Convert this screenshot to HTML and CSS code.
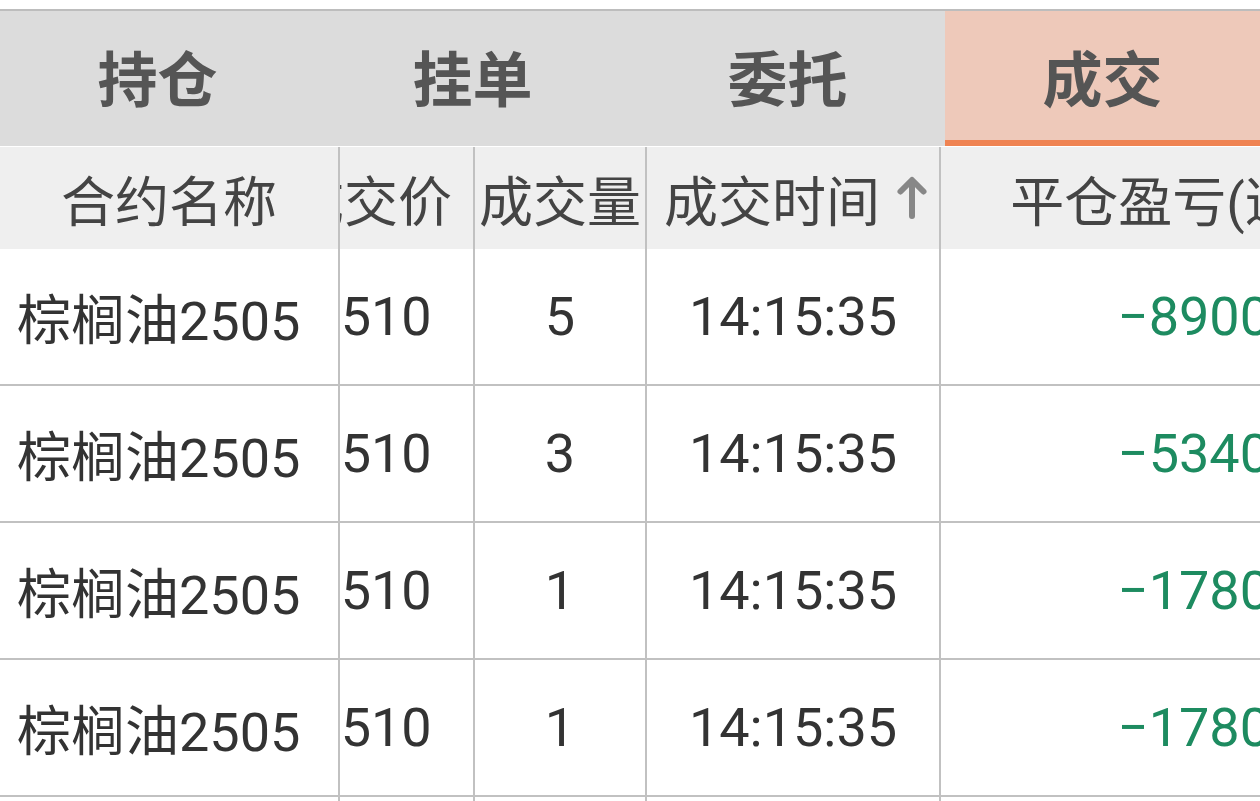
FILE: index.html
```html
<!DOCTYPE html>
<html lang="zh-CN">
<head>
<meta charset="utf-8">
<title>成交</title>
<link rel="stylesheet" href="styles.css">
</head>
<body>
<div class="page">
  <nav class="tabs">
    <div class="tab">持仓</div>
    <div class="tab">挂单</div>
    <div class="tab">委托</div>
    <div class="tab active">成交</div>
  </nav>
  <div class="table">
    <div class="row head">
      <div class="cell c1">合约名称</div>
      <div class="view">
        <div class="inner">
          <div class="cell c2">成交价</div>
          <div class="cell c3">成交量</div>
          <div class="cell c4 sort">成交时间<svg class="arrow" width="32" height="44" viewBox="0 0 32 44"><path d="M16 41 V6 M4.5 16.5 L16 5 L27.5 16.5" fill="none" stroke="#878787" stroke-width="6" stroke-linecap="round" stroke-linejoin="round"/></svg></div>
          <div class="cell c5">平仓盈亏(逐笔)</div>
        </div>
      </div>
    </div>
    <div class="row">
      <div class="cell c1 name">棕榈油2505</div>
      <div class="view">
        <div class="inner">
          <div class="cell c2">8510</div>
          <div class="cell c3">5</div>
          <div class="cell c4">14:15:35</div>
          <div class="cell c5 loss">−8900.00</div>
        </div>
      </div>
    </div>
    <div class="row">
      <div class="cell c1 name">棕榈油2505</div>
      <div class="view">
        <div class="inner">
          <div class="cell c2">8510</div>
          <div class="cell c3">3</div>
          <div class="cell c4">14:15:35</div>
          <div class="cell c5 loss">−5340.00</div>
        </div>
      </div>
    </div>
    <div class="row">
      <div class="cell c1 name">棕榈油2505</div>
      <div class="view">
        <div class="inner">
          <div class="cell c2">8510</div>
          <div class="cell c3">1</div>
          <div class="cell c4">14:15:35</div>
          <div class="cell c5 loss">−1780.00</div>
        </div>
      </div>
    </div>
    <div class="row">
      <div class="cell c1 name">棕榈油2505</div>
      <div class="view">
        <div class="inner">
          <div class="cell c2">8510</div>
          <div class="cell c3">1</div>
          <div class="cell c4">14:15:35</div>
          <div class="cell c5 loss">−1780.00</div>
        </div>
      </div>
    </div>
    <div class="row stub">
      <div class="cell c1"></div>
      <div class="view">
        <div class="inner">
          <div class="cell c2"></div>
          <div class="cell c3"></div>
          <div class="cell c4"></div>
          <div class="cell c5"></div>
        </div>
      </div>
    </div>
  </div>
</div>
</body>
</html>
```

FILE: styles.css
```css
* { box-sizing: border-box; }
html, body {
  margin: 0;
  padding: 0;
  background: #ffffff;
}
body {
  width: 1260px;
  height: 801px;
  overflow: hidden;
  font-family: Roboto, "Noto Sans CJK SC", sans-serif;
}
.page {
  padding-top: 9px;
  height: 801px;
  overflow: hidden;
}
.tabs {
  display: grid;
  grid-template-columns: repeat(4, 1fr);
  border-top: 2px solid #bdbdbd;
  height: 137px;
  background: #dcdcdc;
}
.tab {
  display: flex;
  align-items: center;
  justify-content: center;
  font-family: "Noto Sans CJK SC", sans-serif;
  font-weight: 700;
  font-size: 60px;
  color: #555555;
  padding-bottom: 6px;
}
.tab.active {
  background: #eec9ba;
  border-bottom: 6px solid #ef8352;
  padding-bottom: 0;
}
.table {
  margin-top: 1px;
}
.row {
  display: flex;
  height: 137px;
  border-bottom: 2px solid #c1c1c1;
  font-size: 54px;
  color: #333333;
}
.row.head {
  height: 102px;
  border-bottom: none;
  background: #efefef;
  font-size: 54px;
  color: #444444;
}
.row.stub {
  height: 20px;
  border-bottom: none;
}
.cell {
  display: flex;
  align-items: center;
  justify-content: center;
  height: 100%;
  white-space: nowrap;
  border-right: 2px solid #c1c1c1;
}
.c1 {
  width: 340px;
  flex: none;
}
.c1.name {
  justify-content: flex-start;
  padding-left: 17px;
}
.view {
  flex: 1;
  overflow: hidden;
  height: 100%;
}
.inner {
  display: flex;
  height: 100%;
  margin-left: -71px;
}
.c2 { width: 206px; flex: none; }
.c3 { width: 172px; flex: none; }
.c4 { width: 294px; flex: none; }
.c4.sort { padding-left: 6px; }
.c5 {
  width: 500px;
  flex: none;
  border-right: none;
}
.c5.loss {
  justify-content: flex-end;
  padding-right: 96px;
  color: #1d8b60;
}
.arrow {
  margin-left: 16px;
  margin-top: -2px;
}
```
